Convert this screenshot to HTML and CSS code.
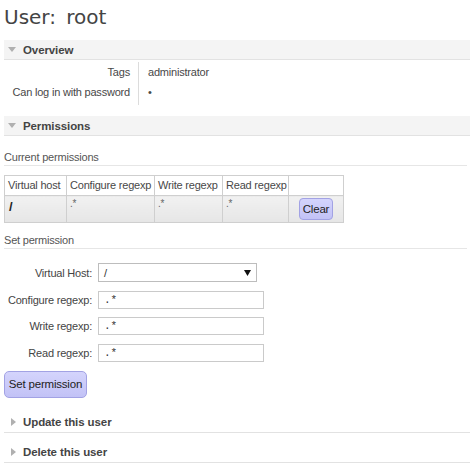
FILE: index.html
```html
<!DOCTYPE html>
<html>
<head>
<meta charset="utf-8">
<link rel="stylesheet" href="styles.css">
</head>
<body>
<h1 class="title">User: root</h1>

<div class="section">
  <h2 class="bar open"><svg class="tri" width="8" height="5" viewBox="0 0 8 5"><path d="M0 0H8L4 5Z"/></svg>Overview</h2>
  <table class="facts">
    <tr><th>Tags</th><td>administrator</td></tr>
    <tr><th>Can log in with password</th><td>&#8226;</td></tr>
  </table>
</div>

<div class="section">
  <h2 class="bar open"><svg class="tri" width="8" height="5" viewBox="0 0 8 5"><path d="M0 0H8L4 5Z"/></svg>Permissions</h2>
  <h3 class="sub first">Current permissions</h3>
  <table class="perms">
    <thead>
      <tr><th class="c1">Virtual host</th><th class="c2">Configure regexp</th><th class="c3">Write regexp</th><th class="c4">Read regexp</th><th class="c5"></th></tr>
    </thead>
    <tbody>
      <tr><td class="vh">/</td><td>.*</td><td>.*</td><td>.*</td><td class="act"><button class="btn clear">Clear</button></td></tr>
    </tbody>
  </table>
  <h3 class="sub">Set permission</h3>
  <div class="form">
    <label>Virtual Host:</label>
    <div class="select"><span>/</span><svg width="7" height="6" viewBox="0 0 7 6"><path d="M0 0H7L3.5 6Z"/></svg></div>
    <label>Configure regexp:</label>
    <input class="inp" type="text" value=".*">
    <label>Write regexp:</label>
    <input class="inp" type="text" value=".*">
    <label>Read regexp:</label>
    <input class="inp" type="text" value=".*">
  </div>
  <button class="btn setp">Set permission</button>
</div>

<h2 class="bar closed upd"><svg class="tri r" width="5" height="8" viewBox="0 0 5 8"><path d="M0 0L5 4L0 8Z"/></svg>Update this user</h2>
<h2 class="bar closed"><svg class="tri r" width="5" height="8" viewBox="0 0 5 8"><path d="M0 0L5 4L0 8Z"/></svg>Delete this user</h2>
</body>
</html>
```

FILE: styles.css
```css
html, body {
  margin: 0;
  background: #fff;
}
body {
  padding: 0 0 0 4px;
  font-family: "Liberation Sans", Arial, sans-serif;
  font-size: 11px;
  letter-spacing: -0.2px;
  color: #484848;
}
.title {
  margin: 0;
  padding-top: 5px;
  font-family: "DejaVu Sans", Verdana, sans-serif;
  font-weight: normal;
  font-size: 20px;
  line-height: 24px;
  letter-spacing: 0;
  word-spacing: 4px;
  color: #444;
}
.bar {
  margin: 0;
  display: flex;
  align-items: center;
  height: 19px;
  border-bottom: 1px solid #e2e2e2;
  font-size: 11.5px;
  font-weight: bold;
  letter-spacing: -0.1px;
  color: #444;
}
.bar.open {
  background: #f4f4f4;
  padding-left: 4px;
}
.bar.closed {
  padding-left: 7px;
  margin-top: 10px;
}
.bar.upd {
  margin-top: 15px;
}
.tri {
  fill: #b0b0b0;
  margin-right: 7px;
}
.tri.r {
  margin-right: 7px;
}
.section:first-of-type {
  margin-top: 11px;
}
.section + .section {
  margin-top: 11px;
}
.facts {
  border-collapse: collapse;
  margin-top: 2px;
}
.facts th {
  width: 126px;
  text-align: right;
  font-weight: normal;
  padding: 0 8px 0 0;
  border-right: 1px solid #dcdcdc;
  line-height: 20px;
  white-space: nowrap;
}
.facts td {
  padding: 0 0 0 9px;
  line-height: 20px;
}
.facts tr:last-child th, .facts tr:last-child td {
  padding-bottom: 3px;
}
.sub {
  margin: 9px 3px 0 0;
  font-size: 11px;
  font-weight: normal;
  color: #555;
  line-height: 16px;
  border-bottom: 1px solid #e6e6e6;
}
.sub.first {
  margin-top: 13px;
}
.perms {
  margin-top: 9px;
  border-collapse: collapse;
  table-layout: fixed;
  width: 339px;
}
.perms th, .perms td {
  border: 1px solid #cfcfcf;
  padding: 0 3px;
  text-align: left;
  white-space: nowrap;
  overflow: hidden;
}
.perms th {
  font-weight: normal;
  line-height: 19px;
  background: #fff;
}
.c1 { width: 55px; }
.c2 { width: 81px; }
.c3 { width: 61px; }
.c4 { width: 59px; }
.c5 { width: 48px; }
.perms tbody td {
  height: 27px;
  vertical-align: top;
  padding-top: 2px;
  box-sizing: border-box;
  background: linear-gradient(#f1f1f1, #e6e6e6);
  color: #666;
  font-size: 10px;
}
.perms td.vh {
  font-size: 13px;
  font-weight: bold;
  color: #222;
  padding-top: 3px;
  padding-left: 4px;
}
.perms td.act {
  text-align: center;
  padding-top: 2px;
}
.btn {
  font-family: "Liberation Sans", Arial, sans-serif;
  color: #222;
  background: linear-gradient(#d4d4fc, #c2c2f6);
  border: 1px solid #a2a2e4;
  border-radius: 4px;
  cursor: pointer;
  letter-spacing: -0.2px;
}
.clear {
  font-size: 11.5px;
  height: 22px;
  padding: 0 3px;
}
.form {
  display: grid;
  grid-template-columns: 88px 166px;
  column-gap: 6px;
  row-gap: 8.5px;
  align-items: center;
  margin-top: 14px;
}
.form label {
  text-align: right;
  font-size: 11px;
  color: #444;
  white-space: nowrap;
}
.select {
  width: 159px;
  height: 19px;
  box-sizing: border-box;
  border: 1px solid #bdbdbd;
  background: #fff;
  display: flex;
  align-items: center;
  justify-content: space-between;
  padding: 0 5px 0 5px;
  font-size: 11px;
  color: #333;
}
.select svg {
  fill: #111;
}
.inp {
  width: 166px;
  height: 18px;
  box-sizing: border-box;
  margin: 0;
  border: 1px solid #cacaca;
  padding: 0 5px;
  font-family: "Liberation Mono", monospace;
  font-size: 11px;
  letter-spacing: 0;
  color: #333;
  outline: none;
}
.setp {
  display: block;
  margin-top: 9px;
  width: 83px;
  height: 27px;
  padding: 0;
  font-size: 11.5px;
  border-radius: 5px;
}
```
